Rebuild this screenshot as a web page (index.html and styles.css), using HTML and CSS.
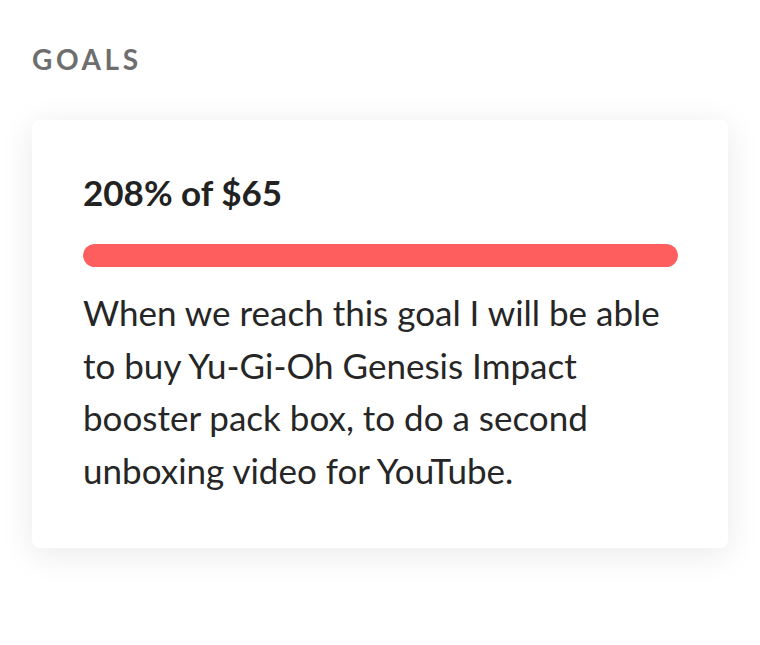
FILE: index.html
```html
<!DOCTYPE html>
<html>
<head>
<meta charset="utf-8">
<link rel="stylesheet" href="styles.css">
</head>
<body>
<main class="page">
  <h2 class="section-title">GOALS</h2>
  <section class="goal-card">
    <h3 class="goal-amount">208% of $65</h3>
    <div class="progress"><div class="progress-fill" style="width:100%"></div></div>
    <p class="goal-text">When we reach this goal I will be able to buy Yu-Gi-Oh Genesis Impact booster pack box, to do a second unboxing video for YouTube.</p>
  </section>
</main>
</body>
</html>
```
FILE: styles.css
```css
html, body {
  margin: 0;
  padding: 0;
  background: #ffffff;
}
body {
  font-family: Lato, "Noto Sans", sans-serif;
  color: #222222;
}
.page {
  padding: 42px 32px 97px 32px;
  width: 696px;
}
.section-title {
  margin: 0;
  font-size: 28px;
  line-height: 34px;
  font-weight: 700;
  letter-spacing: 3.6px;
  color: #6e6e6e;
}
.goal-card {
  margin-top: 44px;
  background: #ffffff;
  border-radius: 8px;
  box-shadow: 0 6px 34px rgba(0, 0, 0, 0.09);
  padding: 52px 50px 52px 51px;
}
.goal-amount {
  margin: 0;
  font-size: 35px;
  line-height: 40px;
  font-weight: 700;
  color: #222222;
}
.progress {
  margin-top: 32px;
  height: 23px;
  border-radius: 12px;
  background: #eeeeee;
  overflow: hidden;
}
.progress-fill {
  height: 100%;
  background: #ff5e5e;
  border-radius: 12px;
}
.goal-text {
  margin: 19px 0 0 0;
  font-size: 35px;
  line-height: 52.5px;
  color: #262626;
}
```
